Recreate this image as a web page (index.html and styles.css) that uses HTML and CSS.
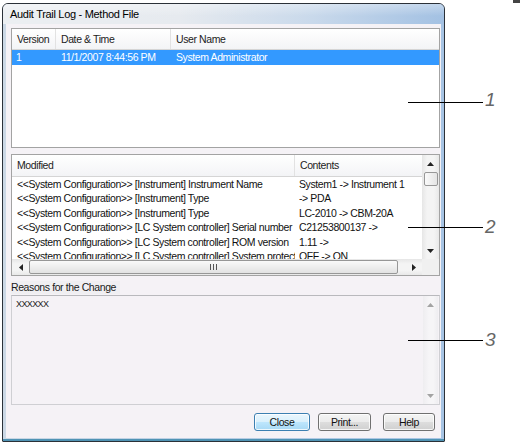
FILE: index.html
```html
<!DOCTYPE html>
<html>
<head>
<meta charset="utf-8">
<link rel="stylesheet" href="styles.css">
</head>
<body>
<div class="window">
  <div class="titlebar">Audit Trail Log - Method File</div>
  <div class="client">
    <div class="panel versions">
      <div class="vhead">
        <div class="hc">Version</div>
        <div class="hc">Date &amp; Time</div>
        <div class="hc last">User Name</div>
      </div>
      <div class="vrow selected">
        <div class="rc">1</div>
        <div class="rc">11/1/2007 8:44:56 PM</div>
        <div class="rc">System Administrator</div>
      </div>
    </div>

    <div class="panel changes">
      <div class="cmain">
        <div class="chead">
          <div class="hc">Modified</div>
          <div class="hc last">Contents</div>
        </div>
        <div class="crows">
          <div class="crow"><div class="rc">&lt;&lt;System Configuration&gt;&gt; [Instrument] Instrument Name</div><div class="rc">System1 -&gt; Instrument 1</div></div>
          <div class="crow"><div class="rc">&lt;&lt;System Configuration&gt;&gt; [Instrument] Type</div><div class="rc"> -&gt; PDA</div></div>
          <div class="crow"><div class="rc">&lt;&lt;System Configuration&gt;&gt; [Instrument] Type</div><div class="rc">LC-2010 -&gt; CBM-20A</div></div>
          <div class="crow"><div class="rc">&lt;&lt;System Configuration&gt;&gt; [LC System controller] Serial number</div><div class="rc">C21253800137 -&gt;</div></div>
          <div class="crow"><div class="rc">&lt;&lt;System Configuration&gt;&gt; [LC System controller] ROM version</div><div class="rc">1.11 -&gt;</div></div>
          <div class="crow"><div class="rc">&lt;&lt;System Configuration&gt;&gt; [LC System controller] System protect</div><div class="rc">OFF -&gt; ON</div></div>
        </div>
      </div>
      <div class="vscroll">
        <div class="sbtn"><svg width="7" height="4" viewBox="0 0 7 4"><polygon points="0,4 3.5,0 7,4" fill="#222"/></svg></div>
        <div class="vthumb"></div>
        <div class="vtrack"></div>
        <div class="sbtn"><svg width="7" height="4" viewBox="0 0 7 4"><polygon points="0,0 3.5,4 7,0" fill="#222"/></svg></div>
      </div>
      <div class="hscroll">
        <div class="sbtn h"><svg width="4" height="7" viewBox="0 0 4 7"><polygon points="4,0 0,3.5 4,7" fill="#222"/></svg></div>
        <div class="hthumb"><svg width="7" height="6" viewBox="0 0 7 6"><rect x="0" y="0" width="1" height="6" fill="#555"/><rect x="3" y="0" width="1" height="6" fill="#555"/><rect x="6" y="0" width="1" height="6" fill="#555"/></svg></div>
        <div class="htrack"></div>
        <div class="sbtn h"><svg width="4" height="7" viewBox="0 0 4 7"><polygon points="0,0 4,3.5 0,7" fill="#222"/></svg></div>
      </div>
      <div class="corner"></div>
    </div>

    <div class="label"><span>Reasons for the Change</span></div>
    <div class="textbox">
      <div class="tbtext">XXXXXX</div>
      <div class="tbscroll">
        <div class="sbtn"><svg width="7" height="4" viewBox="0 0 7 4"><polygon points="0,4 3.5,0 7,4" fill="#a3a3a3"/></svg></div>
        <div class="vtrack"></div>
        <div class="sbtn"><svg width="7" height="4" viewBox="0 0 7 4"><polygon points="0,0 3.5,4 7,0" fill="#a3a3a3"/></svg></div>
      </div>
    </div>

    <div class="footer">
      <div class="btn default close">Close</div>
      <div class="btn print">Print...</div>
      <div class="btn help">Help</div>
    </div>
  </div>
</div>

<div class="mark"></div>
<div class="leader l1"></div><div class="num n1">1</div>
<div class="leader l2"></div><div class="num n2">2</div>
<div class="leader l3"></div><div class="num n3">3</div>
</body>
</html>
```

FILE: styles.css
```css
* { box-sizing: border-box; }
html, body { margin: 0; padding: 0; }
body {
  width: 521px;
  height: 445px;
  position: relative;
  overflow: hidden;
  background: #ffffff;
  font-family: "Liberation Sans", Arial, sans-serif;
  font-size: 10.5px;
  letter-spacing: -0.4px;
  color: #111;
}

.window {
  margin: 3px 0 0 2px;
  width: 443px;
  height: 439px;
  border: 1px solid #2b3138;
  border-radius: 6px 6px 1px 1px;
  background: linear-gradient(to right, #cbd8e5, #a7c4e4);
  padding: 0 3px 3px 3px;
  display: flex;
  flex-direction: column;
  box-shadow: inset 0 -2px 0 #4f93b4;
}

.titlebar {
  height: 20px;
  margin: 0 -3px;
  padding-left: 7px;
  line-height: 20px;
  font-size: 11px;
  letter-spacing: -0.3px;
  color: #000;
  border-radius: 5px 5px 0 0;
  background:
    linear-gradient(to bottom, rgba(255,255,255,0.35), rgba(255,255,255,0) 60%),
    linear-gradient(to right, #eceff2 0%, #e6eaef 40%, #c9d9eb 70%, #a3c1e3 100%);
}

.client {
  flex: 1;
  background: #f5f2f6;
  padding: 4px 1px 0 5px;
  display: flex;
  flex-direction: column;
}

.panel {
  border: 1px solid #a3a3a3;
  background: #ffffff;
  width: 429px;
}

/* versions list */
.versions { height: 120px; }
.vhead, .vrow {
  display: grid;
  grid-template-columns: 44px 115px 1fr;
}
.vhead {
  height: 21px;
  background: linear-gradient(to bottom, #ffffff, #f3f4f6);
  border-bottom: 1px solid #d5d5d5;
}
.hc {
  padding-left: 5px;
  line-height: 20px;
  color: #222;
  border-right: 1px solid #e2e2e2;
  white-space: nowrap;
  overflow: hidden;
}
.hc.last { border-right: none; }
.vrow { height: 15px; line-height: 15px; }
.rc { padding-left: 5px; white-space: nowrap; overflow: hidden; }
.vrow .rc:first-child { padding-left: 4px; }
.selected { background: #3399ff; color: #ffffff; }

/* changes list */
.changes {
  margin-top: 6px;
  height: 122px;
  display: grid;
  grid-template-columns: 410px 17px;
  grid-template-rows: 104px 16px;
}
.cmain { overflow: hidden; }
.chead {
  display: grid;
  grid-template-columns: 283px 1fr;
  height: 22px;
  background: linear-gradient(to bottom, #ffffff, #f3f4f6);
  border-bottom: 1px solid #d5d5d5;
}
.chead .hc { line-height: 21px; }
.crows { height: 82px; overflow: hidden; }
.crow {
  display: grid;
  grid-template-columns: 283px 1fr;
  height: 14.4px;
  line-height: 14.4px;
}
.crow .rc:last-child { padding-left: 4px; }

.vscroll, .tbscroll {
  display: flex;
  flex-direction: column;
  background: linear-gradient(to right, #e6e6e6, #f4f4f4 30%, #f4f4f4 70%, #e8e8e8);
}
.sbtn {
  height: 17px;
  display: flex;
  align-items: center;
  justify-content: center;
  flex: none;
}
.sbtn.h { width: 17px; height: auto; }
.vthumb {
  height: 14px;
  margin: 0 1px 0 2px;
  border: 1px solid #979797;
  border-radius: 2px;
  background: linear-gradient(to right, #fafafa, #e4e4e4);
  flex: none;
}
.vtrack, .htrack { flex: 1; }

.hscroll {
  display: flex;
  background: linear-gradient(to bottom, #e6e6e6, #f4f4f4 30%, #f4f4f4 70%, #e8e8e8);
}
.hthumb {
  width: 369px;
  margin: 1px 0 1px 0;
  border: 1px solid #979797;
  border-radius: 2px;
  background: linear-gradient(to bottom, #fafafa, #e2e2e2);
  display: flex;
  align-items: center;
  justify-content: center;
  flex: none;
}
.corner { background: #f0f0f0; }

/* reasons */
.label {
  height: 19px;
  padding-top: 5px;
  line-height: 13px;
  color: #1a1a1a;
}
.label span {
  display: inline-block;
  background: #f0eff2;
  padding-right: 4px;
}
.textbox {
  width: 429px;
  height: 110px;
  border: 1px solid #cfcfd3;
  border-top-color: #b9b9bd;
  background: #f5f2f6;
  display: flex;
}
.tbtext {
  flex: 1;
  padding: 3px 0 0 4px;
  font-size: 9px;
  letter-spacing: -0.6px;
  color: #222;
}
.tbscroll {
  width: 15px;
  margin-right: 1px;
  background: linear-gradient(to right, #eeedf0, #f6f5f7 40%, #f6f5f7 70%, #eeedf0);
}
.tbscroll .sbtn { height: 17px; }

/* buttons */
.footer {
  display: flex;
  justify-content: flex-end;
  padding: 8px 5px 0 0;
  gap: 8px;
}
.btn {
  height: 18px;
  line-height: 16px;
  text-align: center;
  border: 1px solid #707070;
  border-radius: 3px;
  background: linear-gradient(to bottom, #f4f4f4 0%, #ebebeb 50%, #dddddd 51%, #d0d0d0 100%);
  color: #111;
  box-shadow: inset 0 0 0 1px rgba(255,255,255,0.8);
}
.close { width: 56px; }
.print { width: 53px; }
.help { width: 52px; margin-left: 4px; }
.btn.default {
  border-color: #3c7fb1;
  background: linear-gradient(to bottom, #eaf6fd 0%, #d9f0fc 50%, #bee6fd 51%, #a7d9f5 100%);
}

/* annotations */
.mark {
  position: absolute;
  left: 513px;
  top: 0;
  width: 7px;
  height: 3px;
  background: #444;
}
.leader {
  position: absolute;
  left: 408px;
  width: 75px;
  height: 1px;
  background: #000;
}
.l1 { top: 102px; }
.l2 { top: 227px; }
.l3 { top: 340px; }
.num {
  position: absolute;
  left: 485px;
  font-size: 19px;
  line-height: 1;
  font-style: italic;
  color: #666;
  letter-spacing: 0;
}
.n1 { top: 90px; }
.n2 { top: 217px; }
.n3 { top: 330px; }
```
